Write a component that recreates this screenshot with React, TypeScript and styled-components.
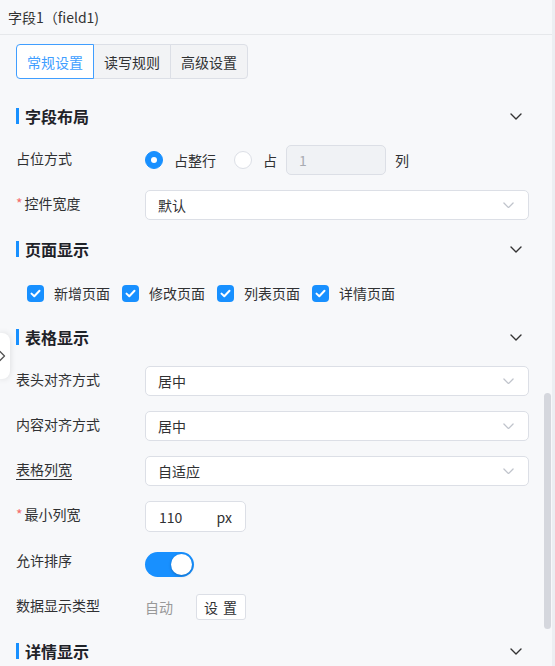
import React from 'react';
import styled, { createGlobalStyle, css } from 'styled-components';

const GlobalStyle = createGlobalStyle`
   * { box-sizing: border-box; }
   body {
      margin: 0;
      background: #eceef2;
      font-family: "Noto Sans CJK SC", "Noto Sans", "Liberation Sans", sans-serif;
      font-size: 14px;
      color: #303133;
   }
`;

const BLUE = '#1890ff';

const Page = styled.div`
   position: relative;
   width: 555px;
   height: 666px;
   overflow: hidden;
`;

const Panel = styled.div`
   position: relative;
   width: 552px;
   height: 666px;
   background: #f7f8fa;
   overflow: hidden;
`;

const PanelHeader = styled.div`
   height: 35px;
   padding: 0 8px;
   display: flex;
   align-items: center;
   border-bottom: 1px solid #e6e8eb;
   color: #333;
   font-size: 14px;
`;

const Body = styled.div`
   padding: 9px 23px 0 16px;
`;

const Tabs = styled.div`
   display: inline-flex;
   margin-bottom: 23px;
`;

const Tab = styled.div<{ $active?: boolean }>`
   height: 35px;
   padding: 0 10px;
   display: flex;
   align-items: center;
   font-size: 14px;
   background: #f2f3f5;
   color: #303133;
   border: 1px solid #dcdfe6;
   margin-left: -1px;
   &:first-child { margin-left: 0; border-radius: 4px 0 0 4px; }
   &:last-child { border-radius: 0 4px 4px 0; }
   ${p => p.$active && css`
      position: relative;
      z-index: 1;
      background: #fff;
      color: #409eff;
      border-color: #409eff;
   `}
`;

const SectionHeader = styled.div`
   height: 30px;
   display: flex;
   align-items: center;
   justify-content: space-between;
   margin-bottom: 13px;
   padding-right: 7px;
`;

const SectionTitle = styled.div`
   display: flex;
   align-items: center;
   font-size: 16px;
   line-height: 20px;
   padding-bottom: 2px;
   font-weight: 700;
   color: #1f2329;
   &::before {
      content: '';
      width: 3px;
      height: 16px;
      margin-right: 6px;
      background: ${BLUE};
   }
`;

const FormItem = styled.div`
   display: flex;
   min-height: 30px;
   margin-bottom: 15px;
`;

const Label = styled.div<{ $underline?: boolean }>`
   width: 129px;
   flex-shrink: 0;
   line-height: 27px;
   color: #303133;
   ${p => p.$underline && css`
      span {
         text-decoration: underline;
         text-underline-offset: 4px;
      }
   `}
`;

const Required = styled.i`
   font-style: normal;
   color: #f56c6c;
   margin-right: 2px;
`;

const Control = styled.div<{ $align?: string }>`
   flex: 1;
   display: flex;
   align-items: ${p => p.$align || 'center'};
`;

const RadioDot = styled.span<{ $checked?: boolean }>`
   width: 18px;
   height: 18px;
   border-radius: 50%;
   display: inline-flex;
   align-items: center;
   justify-content: center;
   background: ${p => (p.$checked ? BLUE : '#fff')};
   border: 1px solid ${p => (p.$checked ? BLUE : '#dcdfe6')};
   &::after {
      content: '';
      width: 6px;
      height: 6px;
      border-radius: 50%;
      background: #fff;
      display: ${p => (p.$checked ? 'block' : 'none')};
   }
`;

const RadioLabel = styled.span<{ $last?: boolean }>`
   margin: 0 ${p => (p.$last ? 0 : 18)}px 0 11px;
`;

const SpanInput = styled.div`
   width: 100px;
   height: 30px;
   margin: 0 9px;
   padding: 0 12px;
   display: flex;
   align-items: center;
   background: #f0f2f5;
   border: 1px solid #dcdfe6;
   border-radius: 5px;
   color: #a8abb2;
`;

const Select = styled.div`
   flex: 1;
   height: 30px;
   padding: 0 14px 0 12px;
   display: flex;
   align-items: center;
   justify-content: space-between;
   background: #fff;
   border: 1px solid #dcdfe6;
   border-radius: 5px;
   color: #303133;
`;

const CheckRow = styled.div`
   display: flex;
   align-items: center;
   height: 30px;
   padding-left: 11px;
   margin-bottom: 15px;
`;

const CheckItem = styled.label`
   display: flex;
   align-items: center;
   margin-right: 12px;
`;

const CheckText = styled.span`
   margin-left: 10px;
`;

const CheckBox = styled.span`
   width: 17px;
   height: 17px;
   border-radius: 4px;
   background: ${BLUE};
   display: inline-flex;
   align-items: center;
   justify-content: center;
`;

const NumberInput = styled.div`
   width: 101px;
   height: 31px;
   padding: 0 13px;
   display: flex;
   align-items: center;
   justify-content: space-between;
   background: #fff;
   border: 1px solid #dcdfe6;
   border-radius: 5px;
   color: #303133;
`;

const Switch = styled.span`
   width: 49px;
   height: 25px;
   border-radius: 13px;
   background: ${BLUE};
   display: flex;
   align-items: center;
   justify-content: flex-end;
   padding-right: 2px;
   &::after {
      content: '';
      width: 21px;
      height: 21px;
      border-radius: 50%;
      background: #fff;
      box-shadow: 0 1px 3px rgba(0, 0, 0, 0.25);
   }
`;

const AutoText = styled.span`
   color: #999;
   margin-right: 23px;
`;

const SmallButton = styled.button`
   width: 50px;
   height: 26px;
   padding: 0;
   background: #fff;
   border: 1px solid #dcdfe6;
   border-radius: 3px;
   font: inherit;
   letter-spacing: 1px;
   color: #303133;
`;

const Scrollbar = styled.div`
   position: absolute;
   left: 544px;
   top: 393px;
   width: 7px;
   height: 236px;
   border-radius: 4px;
   background: #d5d7dd;
`;

const CollapseTab = styled.div`
   position: absolute;
   left: 0;
   top: 333px;
   width: 10px;
   height: 46px;
   border-radius: 0 8px 8px 0;
   background: #fff;
   box-shadow: 0 0 6px rgba(0, 0, 0, 0.12);
   display: flex;
   align-items: center;
   svg { margin-left: -2px; }
`;

const Chevron = ({ color = '#333', w = 12 }: { color?: string; w?: number }) => (
   <svg width={w} height={w * 0.6} viewBox="0 0 12 7" fill="none">
      <path d="M1 1l5 5 5-5" stroke={color} strokeWidth="1.4" strokeLinecap="round" strokeLinejoin="round" />
   </svg>
);

const Tick = () => (
   <svg width="11" height="9" viewBox="0 0 11 9" fill="none">
      <path d="M1.5 4.6l2.8 2.7L9.5 1.8" stroke="#fff" strokeWidth="2" strokeLinecap="round" strokeLinejoin="round" />
   </svg>
);

type SectionProps = { title: string; children?: React.ReactNode };
const Section: React.FC<SectionProps> = ({ title, children }) => (
   <>
      <SectionHeader>
         <SectionTitle>{title}</SectionTitle>
         <Chevron />
      </SectionHeader>
      {children}
   </>
);

const SelectField = ({ value }: { value: string }) => (
   <Select>
      <span>{value}</span>
      <Chevron color="#c0c4cc" w={11} />
   </Select>
);

const pages = ['新增页面', '修改页面', '列表页面', '详情页面'];

export default function App() {
   return (
      <Page>
         <GlobalStyle />
         <Panel>
            <PanelHeader>字段1（field1)</PanelHeader>
            <Body>
               <Tabs>
                  <Tab $active>常规设置</Tab>
                  <Tab>读写规则</Tab>
                  <Tab>高级设置</Tab>
               </Tabs>

               <Section title="字段布局">
                  <FormItem>
                     <Label>占位方式</Label>
                     <Control>
                        <RadioDot $checked />
                        <RadioLabel>占整行</RadioLabel>
                        <RadioDot />
                        <RadioLabel $last>占</RadioLabel>
                        <SpanInput>1</SpanInput>
                        <span>列</span>
                     </Control>
                  </FormItem>
                  <FormItem>
                     <Label><Required>*</Required>控件宽度</Label>
                     <Control><SelectField value="默认" /></Control>
                  </FormItem>
               </Section>

               <Section title="页面显示">
                  <CheckRow>
                     {pages.map(p => (
                        <CheckItem key={p}>
                           <CheckBox><Tick /></CheckBox>
                           <CheckText>{p}</CheckText>
                        </CheckItem>
                     ))}
                  </CheckRow>
               </Section>

               <Section title="表格显示">
                  <FormItem>
                     <Label>表头对齐方式</Label>
                     <Control><SelectField value="居中" /></Control>
                  </FormItem>
                  <FormItem>
                     <Label>内容对齐方式</Label>
                     <Control><SelectField value="居中" /></Control>
                  </FormItem>
                  <FormItem>
                     <Label $underline><span>表格列宽</span></Label>
                     <Control><SelectField value="自适应" /></Control>
                  </FormItem>
                  <FormItem>
                     <Label><Required>*</Required>最小列宽</Label>
                     <Control>
                        <NumberInput><span>110</span><span>px</span></NumberInput>
                     </Control>
                  </FormItem>
                  <FormItem>
                     <Label>允许排序</Label>
                     <Control $align="flex-end"><Switch /></Control>
                  </FormItem>
                  <FormItem>
                     <Label>数据显示类型</Label>
                     <Control>
                        <AutoText>自动</AutoText>
                        <SmallButton>设 置</SmallButton>
                     </Control>
                  </FormItem>
               </Section>

               <Section title="详情显示" />
            </Body>
            <Scrollbar />
         </Panel>
         <CollapseTab>
            <svg width="8" height="12" viewBox="0 0 8 12" fill="none">
               <path d="M2 1.5l4.5 4.5L2 10.5" stroke="#555" strokeWidth="1.3" strokeLinecap="round" strokeLinejoin="round" />
            </svg>
         </CollapseTab>
      </Page>
   );
}
